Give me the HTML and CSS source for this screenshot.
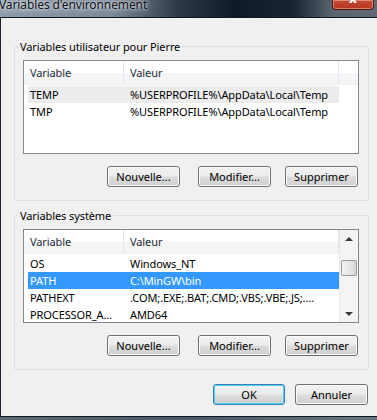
FILE: index.html
```html
<!DOCTYPE html>
<html>
<head>
    <title>Variables d'environnement</title>
    <link rel="stylesheet" href="styles.css">
</head>
<body>
    <div class="titlebar">
        <span class="title">Variables d'environnement</span>
        <span class="close-btn"><span class="close-x">x</span></span>
    </div>

    <div class="client">
        <div class="group">
            <div class="group-title">Variables utilisateur pour Pierre</div>
            <div class="list">
                <div class="list-head">
                    <div class="head-cell col-var">Variable</div>
                    <div class="head-cell col-val">Valeur</div>
                    <div class="head-cell head-fill"></div>
                </div>
                <div class="row row-soft">
                    <div class="cell col-var">TEMP</div>
                    <div class="cell">%USERPROFILE%\AppData\Local\Temp</div>
                </div>
                <div class="row">
                    <div class="cell col-var">TMP</div>
                    <div class="cell">%USERPROFILE%\AppData\Local\Temp</div>
                </div>
            </div>
            <div class="button-row">
                <button class="btn btn-new">Nouvelle...</button>
                <button class="btn btn-edit">Modifier...</button>
                <button class="btn">Supprimer</button>
            </div>
        </div>

        <div class="group group-system">
            <div class="group-title">Variables système</div>
            <div class="list list-scroll">
                <div class="list-body">
                    <div class="list-head">
                        <div class="head-cell col-var">Variable</div>
                        <div class="head-cell col-val">Valeur</div>
                    </div>
                    <div class="row">
                        <div class="cell col-var">OS</div>
                        <div class="cell">Windows_NT</div>
                    </div>
                    <div class="row row-selected">
                        <div class="cell col-var">PATH</div>
                        <div class="cell">C:\MinGW\bin</div>
                    </div>
                    <div class="row">
                        <div class="cell col-var">PATHEXT</div>
                        <div class="cell">.COM;.EXE;.BAT;.CMD;.VBS;.VBE;.JS;....</div>
                    </div>
                    <div class="row">
                        <div class="cell col-var">PROCESSOR_A...</div>
                        <div class="cell">AMD64</div>
                    </div>
                </div>
                <div class="scrollbar">
                    <div class="arrow arrow-up"></div>
                    <div class="track">
                        <div class="thumb"></div>
                    </div>
                    <div class="arrow arrow-down"></div>
                </div>
            </div>
            <div class="button-row">
                <button class="btn btn-new">Nouvelle...</button>
                <button class="btn btn-edit">Modifier...</button>
                <button class="btn">Supprimer</button>
            </div>
        </div>

        <div class="dialog-buttons">
            <button class="btn btn-default">OK</button>
            <button class="btn">Annuler</button>
        </div>
    </div>
</body>
</html>
```

FILE: styles.css
```css
/* Window frame */
body {
    margin: 0;
    width: 377px;
    height: 420px;
    overflow: hidden;
    font-family: "Noto Sans", "Open Sans", sans-serif;
    font-size: 11px;
    letter-spacing: -0.1px;
    color: #000;
    background: linear-gradient(to right, #5d6873, #4b5865 50%, #6a7580);
}
.titlebar {
    height: 17px;
    display: flex;
    align-items: flex-start;
    background: linear-gradient(to right, #8e9caa 0%, #7a8897 30%, #2a3646 48%, #0f1a29 62%, #1a2534 78%, #5a646e 88%, #606a74 100%);
}
.title {
    margin-top: -4px;
    margin-left: -1px;
    font-size: 12px;
    line-height: 17px;
    color: #111;
    text-shadow: 0 0 6px #e8eef4, 0 0 3px #e8eef4;
}
.close-btn {
    margin-left: auto;
    margin-right: 3px;
    width: 40px;
    height: 9px;
    border: 1px solid #4a1d14;
    border-top: none;
    border-radius: 0 0 4px 4px;
    background: linear-gradient(to bottom, #c24a36, #b8341f);
    box-shadow: inset 0 0 0 1px rgba(255, 200, 180, 0.5);
    display: flex;
    justify-content: center;
    overflow: hidden;
}
.close-x {
    margin-top: -9px;
    font-family: "DejaVu Sans", sans-serif;
    font-weight: bold;
    font-size: 13px;
    color: #fff;
}
.client {
    box-sizing: border-box;
    height: 400px;
    background-color: #f0f0f0;
    border-top: 1px solid #0e1620;
    border-left: 1px solid #1a2430;
    border-bottom: 1px solid #101820;
    padding-top: 28px;
}

/* Group boxes */
.group {
    margin: 0 8px 0 13px;
    border: 1px solid #d5dfe5;
    border-radius: 3px;
    padding: 0 9px 13px 8px;
}
.group-system {
    margin-top: 14px;
}
.group-title {
    width: fit-content;
    margin: -8px 0 0 -5px;
    padding: 0 2px;
    line-height: 15px;
    font-size: 11px;
    background-color: #f0f0f0;
}

/* List views */
.list {
    margin-top: 6px;
    height: 92px;
    border: 1px solid #828790;
    background-color: #fff;
    overflow: hidden;
}
.list-scroll {
    display: flex;
}
.list-body {
    flex: 1;
}
.list-head {
    display: flex;
    height: 23px;
    margin-bottom: 1px;
    background: linear-gradient(to bottom, #fff 0%, #fff 50%, #f4f5f7 51%, #f3f4f6 100%);
    border-bottom: 1px solid #eef0f2;
}
.head-cell {
    flex-shrink: 0;
    padding-left: 6px;
    line-height: 23px;
    color: #1e2a38;
    border-right: 1px solid #e3e6ea;
}
.head-cell.col-var {
    width: 93px;
}
.head-cell.col-val {
    width: 208px;
}
.head-fill {
    flex: 1;
    border-right: none;
}
.row {
    display: flex;
    height: 17px;
    line-height: 17px;
    margin-left: 4px;
    width: 311px;
    white-space: nowrap;
    overflow: hidden;
}
.cell {
    flex-shrink: 0;
    padding-left: 2px;
}
.cell.col-var {
    width: 98px;
}
.row-soft {
    background-color: #ececec;
}
.row-selected {
    background-color: #3399ff;
    color: #fff;
}

/* Scrollbar */
.scrollbar {
    width: 18px;
    display: flex;
    flex-direction: column;
    background-color: #f4f4f4;
    border-left: 1px solid #e8e8e8;
}
.arrow {
    height: 17px;
    display: flex;
    align-items: center;
    justify-content: center;
}
.arrow::before {
    content: "";
    border-left: 4px solid transparent;
    border-right: 4px solid transparent;
}
.arrow-up::before {
    border-bottom: 4px solid #3b3b3b;
}
.arrow-down::before {
    border-top: 4px solid #3b3b3b;
}
.track {
    flex: 1;
    padding: 13px 1px 0 1px;
}
.thumb {
    height: 14px;
    border: 1px solid #9a9a9a;
    border-radius: 2px;
    background: linear-gradient(to right, #f3f3f3, #e6e6e6 50%, #d6d6d6);
}

/* Buttons */
.button-row {
    display: flex;
    justify-content: flex-end;
    margin-top: 12px;
    padding-right: 1px;
}
.btn {
    width: 73px;
    height: 21px;
    padding: 0;
    font-family: "Noto Sans", "Open Sans", sans-serif;
    font-size: 11px;
    color: #000;
    border: 1px solid #707070;
    border-radius: 3px;
    background: linear-gradient(to bottom, #f2f2f2 0%, #ebebeb 48%, #dddddd 52%, #cfcfcf 100%);
    box-shadow: inset 0 0 0 1px #fcfcfc;
}
.btn-new {
    margin-right: 18px;
}
.btn-edit {
    margin-right: 14px;
}
.dialog-buttons {
    display: flex;
    justify-content: flex-end;
    gap: 10px;
    margin: 14px 9px 0 0;
}
.btn-default {
    width: 72px;
    border-color: #3c7fb1;
    box-shadow: inset 0 0 0 1px #48d3fb;
}
```
